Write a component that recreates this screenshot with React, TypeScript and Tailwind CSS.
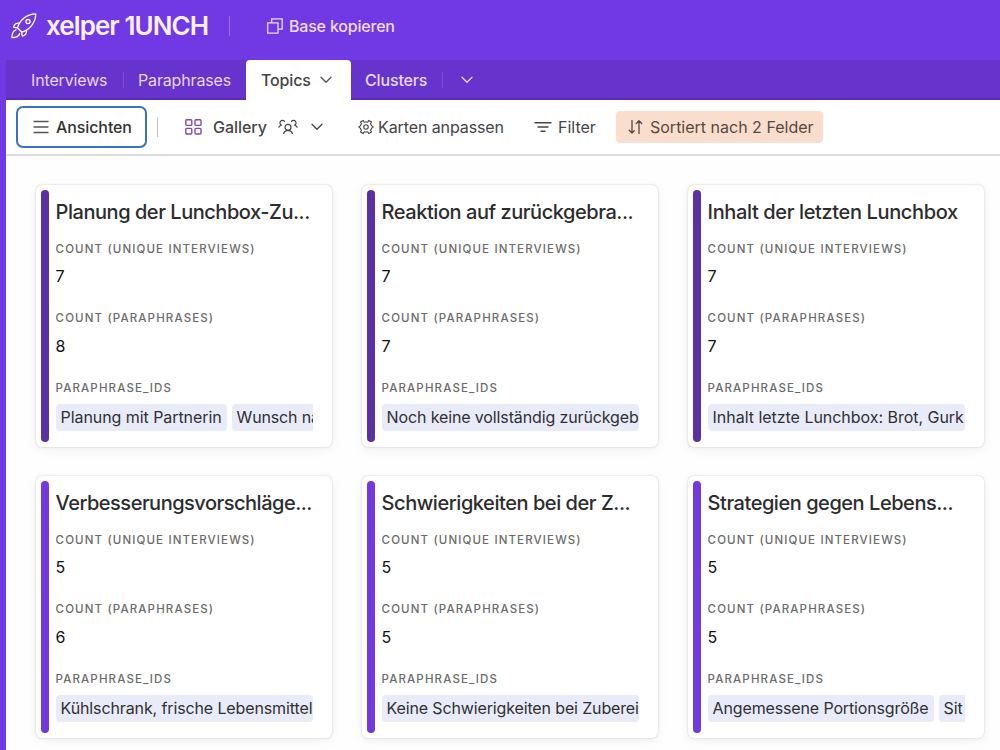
import type { ReactNode } from "react";

type Card = {
  title: string;
  tracking: string;
  interviews: number;
  paraphrases: number;
  chips: { text: string; className: string }[];
  bar: string;
};

const DARK = "bg-[#5b30a3]";
const LIGHT = "bg-[#7139de]";

const rows: Card[][] = [
  [
    {
      title: "Planung der Lunchbox-Zu...",
      tracking: "tracking-[-0.46px]",
      interviews: 7,
      paraphrases: 8,
      bar: DARK,
      chips: [
        { text: "Planung mit Partnerin", className: "w-[171px] tracking-[-0.07px]" },
        { text: "Wunsch na", className: "w-[160px] tracking-[-0.15px]" },
      ],
    },
    {
      title: "Reaktion auf zurückgebra...",
      tracking: "tracking-[-0.45px]",
      interviews: 7,
      paraphrases: 7,
      bar: DARK,
      chips: [{ text: "Noch keine vollständig zurückgeb", className: "w-[257px] tracking-[-0.13px]" }],
    },
    {
      title: "Inhalt der letzten Lunchbox",
      tracking: "tracking-[-0.37px]",
      interviews: 7,
      paraphrases: 7,
      bar: DARK,
      chips: [{ text: "Inhalt letzte Lunchbox: Brot, Gurk", className: "w-[257px] tracking-[-0.03px]" }],
    },
  ],
  [
    {
      title: "Verbesserungsvorschläge...",
      tracking: "tracking-[-0.5px]",
      interviews: 5,
      paraphrases: 6,
      bar: LIGHT,
      chips: [{ text: "Kühlschrank, frische Lebensmittel", className: "w-[257px] tracking-[-0.12px]" }],
    },
    {
      title: "Schwierigkeiten bei der Z...",
      tracking: "tracking-[-0.45px]",
      interviews: 5,
      paraphrases: 5,
      bar: LIGHT,
      chips: [{ text: "Keine Schwierigkeiten bei Zuberei", className: "w-[257px] tracking-[-0.14px]" }],
    },
    {
      title: "Strategien gegen Lebens...",
      tracking: "tracking-[-0.46px]",
      interviews: 5,
      paraphrases: 5,
      bar: LIGHT,
      chips: [
        { text: "Angemessene Portionsgröße", className: "w-[226px] tracking-[-0.14px]" },
        { text: "Sit", className: "w-[60px] tracking-[-0.1px]" },
      ],
    },
  ],
];

function Chevron({ className }: { className: string }) {
  return (
    <svg viewBox="0 0 12 8" className={`h-2 w-3 shrink-0 ${className}`} fill="none" stroke="currentColor" strokeWidth="1.3" strokeLinecap="round" strokeLinejoin="round">
      <path d="M1 1.3 6 6.3 11 1.3" />
    </svg>
  );
}

function Rocket() {
  return (
    <svg viewBox="0 0 26 26" className="ml-[11px] h-[26px] w-[26px] shrink-0 text-white" fill="none" stroke="currentColor" strokeWidth="1.3" strokeLinecap="round" strokeLinejoin="round">
      <path d="M6.500 14.800 C8.500 7.500 15 1.200 24.800 .9 C24.500 10 18.500 16.800 10.800 19.200 Z" />
      <circle cx="17" cy="8.600" r="2.100" />
      <path d="M8.600 10.200 C5.500 9.600 3.200 11 2.600 14.200 C4 14.700 5.200 14.800 6.500 14.800" />
      <path d="M15.300 17.200 C16 20.200 14.300 22.400 11.300 23.100 C10.800 21.700 10.700 20.500 10.800 19.200" />
      <path d="M5 16.800 C2.200 17.600 1 20.500 .9 24.600 C4.600 24.600 7.900 23.500 8.700 20.500" />
    </svg>
  );
}

function Field({ label, children }: { label: string; children: ReactNode }) {
  return (
    <div className="h-[69.500px]">
      <div className="h-4 text-[11.500px] leading-4 font-medium tracking-[1.13px] whitespace-nowrap text-[#6b6b6b]">{label}</div>
      {children}
    </div>
  );
}

function TopicCard({ card }: { card: Card }) {
  return (
    <article className="flex h-[262px] w-[296.500px] shrink-0 rounded-md bg-white py-[5px] pl-[5px] shadow-[0_0_2px_rgba(0,0,0,0.22),0_3px_12px_rgba(0,0,0,0.06)]">
      <div className={`w-2 shrink-0 rounded-full ${card.bar}`} />
      <div className="ml-[7px] w-[257px] overflow-hidden pt-[10px]">
        <h2 className={`mb-[16.500px] h-6 text-[20px] leading-6 font-medium whitespace-nowrap text-[#2c2c2e] ${card.tracking}`}>{card.title}</h2>
        <Field label="COUNT (UNIQUE INTERVIEWS)">
          <div className="mt-[9.500px] text-base leading-5 text-[#111]">{card.interviews}</div>
        </Field>
        <Field label="COUNT (PARAPHRASES)">
          <div className="mt-[9.500px] text-base leading-5 text-[#111]">{card.paraphrases}</div>
        </Field>
        <Field label="PARAPHRASE_IDS">
          <div className="mt-[8.500px] flex w-[257px] gap-[5px] overflow-hidden">
            {card.chips.map((chip) => (
              <span key={chip.text} className={`h-[27px] shrink-0 rounded-[4px] bg-[#e9ecf8] pl-[5px] text-base leading-[27px] whitespace-nowrap text-[#2f3033] ${chip.className}`}>
                {chip.text}
              </span>
            ))}
          </div>
        </Field>
      </div>
    </article>
  );
}

export default function App() {
  return (
    <div className="flex h-[750px] w-[1000px] flex-col overflow-hidden bg-[#7139e3] font-['Inter',sans-serif]">
      <header className="flex h-[60px] shrink-0 items-center pb-[8px] whitespace-nowrap">
        <Rocket />
        <h1 className="ml-[9px] w-[163px] text-[26px] leading-8 font-semibold tracking-[-0.93px] text-[#faf0ff]">xelper 1UNCH</h1>
        <div className="ml-[20px] h-5 w-px bg-[#9c74ec]" />
        <svg viewBox="0 0 16 16" className="ml-[37px] h-4 w-4 text-[#eedcfc]" fill="none" stroke="currentColor" strokeWidth="1.25">
          <path d="M.7 4.800H11V15.200H.7Z M4.700 4.800V.8H15.200V11H11" />
        </svg>
        <span className="ml-[6px] text-base font-medium tracking-[-0.2px] text-[#eedcfc]">Base kopieren</span>
      </header>
      <div className="flex min-h-0 flex-1 flex-col pl-[6px]">
        <nav className="flex h-[40px] shrink-0 items-center bg-[linear-gradient(#6633cd_37px,#5529ad_40px)] text-base tracking-[-0.15px] whitespace-nowrap text-[#e9d7fa]">
          <span className="ml-[25px] w-[77px]">Interviews</span>
          <div className="ml-[15px] h-4 w-px bg-[#7d50d6]" />
          <span className="ml-[14px] w-[93px]">Paraphrases</span>
          <div className="ml-[15px] flex h-[40px] w-[105px] items-center rounded-t-[4px] bg-white pl-[15px] font-medium text-[#444]">
            <span className="w-[50px]">Topics</span>
            <Chevron className="ml-[9px] text-[#555]" />
          </div>
          <span className="ml-[14px] w-[62px] font-medium">Clusters</span>
          <div className="ml-[15px] h-4 w-px bg-[#7d50d6]" />
          <Chevron className="ml-[18px]" />
        </nav>
        <div className="flex h-[56px] shrink-0 items-center border-b-2 border-[#dcdcdc] bg-white text-base whitespace-nowrap text-[#454545]">
          <button className="ml-[10px] flex h-[42px] w-[131px] items-center rounded-[7px] border-2 border-[#3b70c4] pl-[15px] text-[#333]">
            <svg viewBox="0 0 16 14" className="h-[14px] w-4 text-[#555]" stroke="currentColor" strokeWidth="1.4">
              <path d="M.5 1.500H15.500M.5 7H15.500M.5 12.500H15.500" />
            </svg>
            <span className="ml-[7px] font-medium tracking-[-0.1px]">Ansichten</span>
          </button>
          <div className="ml-[10px] h-5 w-px bg-[#c4c4c4]" />
          <svg viewBox="0 0 17 16" className="ml-[27px] h-4 w-[17px] text-[#7a4bb8]" fill="none" stroke="currentColor" strokeWidth="1.4">
            <rect x=".8" y=".8" width="6" height="5.600" rx="1" />
            <rect x="10" y=".8" width="6" height="5.600" rx="1" />
            <rect x=".8" y="9.400" width="6" height="5.600" rx="1" />
            <rect x="10" y="9.400" width="6" height="5.600" rx="1" />
          </svg>
          <span className="ml-[11px] w-[54px] font-medium tracking-[-0.05px]">Gallery</span>
          <svg viewBox="0 0 20 16" className="ml-[11px] h-4 w-5 shrink-0" fill="none" stroke="currentColor" strokeWidth="1.2" strokeLinecap="round">
            <circle cx="10" cy="8.300" r="3" />
            <path d="M5.600 14.500C6.400 12.300 7.900 11.300 10 11.300S13.600 12.300 14.400 14.500" />
            <path d="M6.500 2.400A2.500 2.500 0 1 0 3.600 6.200C2.400 6.300 1.500 7 .9 8.100M13.500 2.400A2.500 2.500 0 1 1 16.400 6.200C17.600 6.300 18.500 7 19.100 8.100" />
          </svg>
          <Chevron className="ml-[13px]" />
          <svg viewBox="0 0 16 16" className="ml-[35px] h-4 w-4 shrink-0" fill="none" stroke="currentColor" strokeWidth="1.1" strokeLinejoin="round">
            <circle cx="8" cy="8" r="2.200" />
            <path d="M6.300 3.200 5.300 1.400 2.500 3 3.500 4.800C2.900 5.500 2.500 6.100 2.300 6.900L.8 8 2.300 9.100C2.500 9.900 2.900 10.500 3.500 11.200L2.500 13 5.300 14.600 6.300 12.800C7.400 13.100 8.600 13.100 9.700 12.800L10.700 14.600 13.500 13 12.500 11.200C13.100 10.500 13.500 9.900 13.700 9.100L15.200 8 13.700 6.900C13.500 6.100 13.100 5.500 12.500 4.800L13.500 3 10.700 1.400 9.700 3.200C8.600 2.900 7.400 2.900 6.300 3.200Z" />
          </svg>
          <span className="ml-1 w-[126px] tracking-[-0.1px]">Karten anpassen</span>
          <svg viewBox="0 0 18 12" className="ml-[30px] h-3 w-[18px] shrink-0" stroke="currentColor" strokeWidth="1.4">
            <path d="M.5 1.800H17.500M3.500 6H14.500M6.500 10.200H11.500" />
          </svg>
          <span className="ml-[6px] w-[38px]">Filter</span>
          <div className="ml-[20px] flex h-8 w-[207px] items-center rounded-[4px] bg-[#f9decd] pl-3 text-[#57493f]">
            <svg viewBox="0 0 16 16" className="h-4 w-4 shrink-0" fill="none" stroke="currentColor" strokeWidth="1.3" strokeLinecap="round" strokeLinejoin="round">
              <path d="M4 1.500V14M1.200 11.200 4 14 6.300 11.700M11 14.500V1.800M8.300 4.500 11 1.800 13.700 4.500" />
            </svg>
            <span className="ml-[6px]">Sortiert nach 2 Felder</span>
          </div>
        </div>
        <main className="flex min-h-0 flex-1 flex-col gap-[29px] overflow-hidden bg-[#fefefe] pt-[29px] pl-[29.600px]">
          {rows.map((row, i) => (
            <div key={i} className="flex gap-[29.500px]">
              {row.map((card) => (
                <TopicCard key={card.title} card={card} />
              ))}
            </div>
          ))}
        </main>
      </div>
    </div>
  );
}
